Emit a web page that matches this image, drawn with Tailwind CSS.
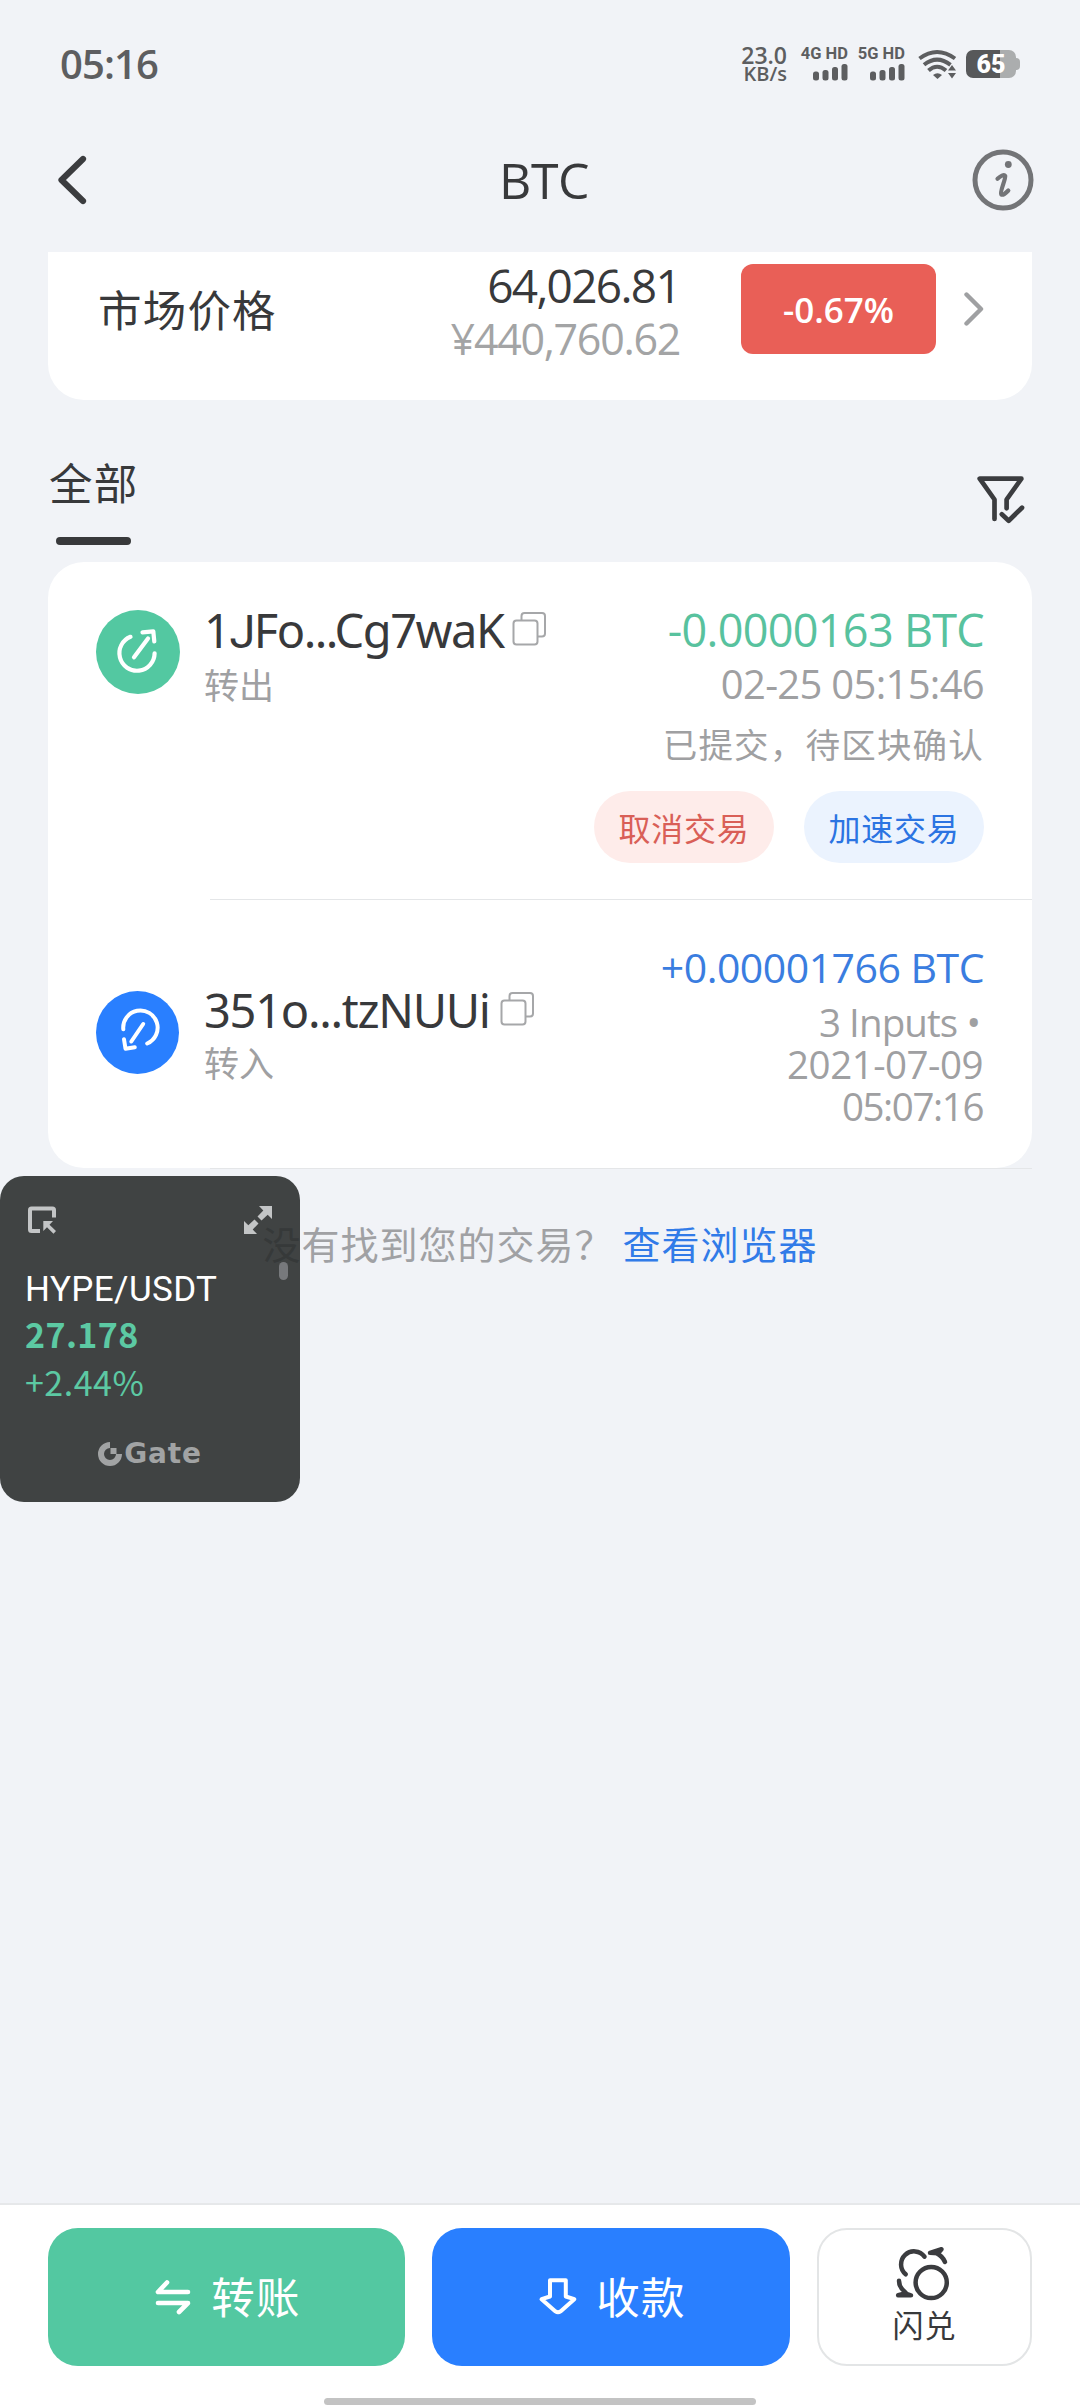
<!DOCTYPE html>
<html lang="zh-CN">
<head>
<meta charset="utf-8">
<title>BTC</title>
<script src="https://cdn.jsdelivr.net/npm/@tailwindcss/browser@4"></script>
</head>
<body class="bg-[#f1f3f7]">
<div class="relative flex h-[2408px] w-[1080px] flex-col overflow-hidden bg-[#f1f3f7] font-['Open_Sans','Noto_Sans_CJK_SC',sans-serif] text-[#38393b]">

  <!-- Status bar -->
  <header class="flex h-[128px] shrink-0 items-center justify-between pr-[60px] pl-[60px] text-[#5d5e60]">
    <div class="text-[40px] leading-none font-semibold tracking-[-0.9px]">05:16</div>
    <div class="flex items-center">
      <div class="mr-[13px] flex flex-col items-end">
        <div class="text-[23px] leading-[20px] font-semibold">23.0</div>
        <div class="text-[20px] leading-[18px] font-semibold">KB/s</div>
      </div>
      <div class="mr-[9px] flex h-[34px] w-[48px] flex-col items-end justify-between font-['Roboto',sans-serif]">
        <div class="text-[16.5px] leading-[14px] font-bold whitespace-nowrap">4G HD</div>
        <svg width="36" height="17" viewBox="0 0 36 17" fill="currentColor"><rect x="1" y="7.500" width="6" height="9" rx="2.500"/><rect x="10.500" y="6" width="6" height="10.500" rx="2.500"/><rect x="20" y="3" width="6" height="13.500" rx="2.500"/><rect x="29.500" y="0" width="6" height="16.500" rx="2.500"/></svg>
      </div>
      <div class="mr-[12px] flex h-[34px] w-[48px] flex-col items-end justify-between font-['Roboto',sans-serif]">
        <div class="text-[16.5px] leading-[14px] font-bold whitespace-nowrap">5G HD</div>
        <svg width="36" height="17" viewBox="0 0 36 17" fill="currentColor"><rect x="1" y="7.500" width="6" height="9" rx="2.500"/><rect x="10.500" y="6" width="6" height="10.500" rx="2.500"/><rect x="20" y="3" width="6" height="13.500" rx="2.500"/><rect x="29.500" y="0" width="6" height="16.500" rx="2.500"/></svg>
      </div>
      <svg class="mr-[9px]" width="40" height="32" viewBox="0 0 40 32" fill="none" stroke="currentColor" stroke-width="4">
        <path d="M2.500 10.500Q20 -2.500 38 10.500"/><path d="M7 16.800Q20 6.500 33.500 16.800"/><path d="M11.500 22.500Q20 15 29 22.500"/>
        <path d="M16 27Q20.500 23.500 25 27L20.500 31Z" fill="currentColor" stroke="none"/>
        <path d="M31 22.500L35 17L39 22.500ZM31 25L35 30.500L39 25Z" fill="currentColor" stroke="none"/>
      </svg>
      <div class="flex items-center">
        <div class="flex h-[28px] w-[50px] items-center justify-center rounded-[7px] bg-linear-to-r from-[#57585a] from-68% to-[#abadae] to-68% font-['Roboto',sans-serif] text-[25px] leading-none font-black text-white">65</div>
        <div class="h-[12px] w-[4px] rounded-r-[4px] bg-[#abadae]"></div>
      </div>
    </div>
  </header>

  <!-- Title bar -->
  <nav class="flex h-[104px] shrink-0 items-center justify-between pr-[46px] pl-[54px]">
    <svg width="62" height="52" viewBox="0 0 62 52" fill="none" stroke="#3b3c3f" stroke-width="6.200" stroke-linecap="round" stroke-linejoin="round"><path d="M29 5L7.500 26L29 47"/></svg>
    <h1 class="text-[50px] leading-[52px] font-medium tracking-[-0.5px]">BTC</h1>
    <svg width="62" height="62" viewBox="0 0 62 62" fill="none" stroke="#737477"><circle cx="31" cy="31" r="28" stroke-width="5"/><circle cx="36.300" cy="15.500" r="3.400" fill="#737477" stroke="none"/><path d="M25.500 29.800C28.500 27 32 25 33.200 26.800C34 29.500 27.500 43 29.200 45.400C30.500 46.500 33.500 44.500 36.300 41.500" stroke-width="4.200" stroke-linecap="round"/></svg>
  </nav>

  <!-- Market price -->
  <section class="mx-[48px] mt-[20px] h-[148px] shrink-0 rounded-b-[36px] bg-white">
    <div class="flex h-[114px] items-center pr-[48px] pl-[50px]">
      <div class="mt-[4px] text-[43.5px] leading-none tracking-[1.2px]">市场价格</div>
      <div class="mt-[6px] ml-auto flex flex-col items-end leading-[54px]">
        <div class="text-[46px] tracking-[-1.7px]">64,026.81</div>
        <div class="text-[43px] tracking-[-1.3px] text-[#a3a4a5]">¥440,760.62</div>
      </div>
      <div class="ml-[61px] flex h-[90px] w-[195px] items-center justify-center rounded-[12px] bg-[#e95f57] text-[35px] leading-none font-semibold text-white">-0.67%</div>
      <svg class="ml-[28px]" width="20" height="36" viewBox="0 0 20 36" fill="none" stroke="#9fa0a2" stroke-width="4.400" stroke-linecap="round" stroke-linejoin="round"><path d="M2.500 3.500L17 18L2.500 32.500"/></svg>
    </div>
  </section>

  <!-- Tabs and filter -->
  <div class="flex h-[162px] shrink-0 items-start justify-between pr-[53px] pl-[49px]">
    <div class="flex flex-col items-center pt-[60px]">
      <div class="text-[43.5px] leading-[48px] tracking-[1.2px]">全部</div>
      <div class="mt-[29px] h-[8px] w-[75px] rounded-full bg-[#38393b]"></div>
    </div>
    <svg class="mt-[74px]" width="52" height="52" viewBox="0 0 52 52" fill="none" stroke="#3b3c3f" stroke-width="4.700" stroke-linecap="round" stroke-linejoin="round"><path d="M19.500 45V25.500L4.700 4.700H46.400L31.600 25.500V34.300"/><path d="M26.800 40.300L33.700 46.700L47 33.700"/></svg>
  </div>

  <!-- Transactions -->
  <section class="mx-[48px] flex h-[606px] shrink-0 flex-col rounded-[36px] bg-white">
    <article class="flex h-[337px] items-start pr-[48px] pl-[48px]">
      <svg class="mt-[48px]" width="84" height="84" viewBox="0 0 84 84" fill="none" stroke="#fff" stroke-width="4.200" stroke-linecap="round" stroke-linejoin="round"><circle cx="42" cy="42" r="42" fill="#53c8a1" stroke="none"/><path d="M34.500 26.800A17.600 17.600 0 1 0 58.600 43.300"/><path d="M38 47.300L52 28.500M46.500 22.300L57.300 21.300L58.300 31.500"/></svg>
      <div class="mt-[44px] ml-[24px]">
        <div class="flex items-start">
          <div class="font-['Noto_Sans',sans-serif] text-[47px] leading-[48px] tracking-[-1.5px]">1<span class="font-['Roboto',sans-serif]">J</span>Fo...Cg7waK</div>
          <svg class="mt-[5px] ml-[8px]" width="35" height="35" viewBox="0 0 35 35" fill="none" stroke="#a6a7a9" stroke-width="2"><path d="M9.500 9V5Q9.500 2 12.500 2H30Q33 2 33 5V22.500Q33 25.500 30 25.500H26"/><rect x="1.500" y="9.500" width="24" height="24" rx="3"/></svg>
        </div>
        <div class="mt-[8px] text-[35px] leading-[44px] text-[#9fa0a2]">转出</div>
      </div>
      <div class="mt-[44px] ml-auto flex flex-col items-end text-[#9fa0a2]">
        <div class="text-[45px] leading-[48px] tracking-[-0.7px] text-[#58c29e]">-0.0000163 BTC</div>
        <div class="mt-[8px] text-[40px] leading-[44px] tracking-[-0.7px]">02-25 05:15:46</div>
        <div class="mt-[17px] text-[34.5px] leading-[44px] tracking-[1.2px]">已提交，待区块确认</div>
        <div class="mt-[24px] flex gap-[30px] text-[32px] leading-none tracking-[0.8px]">
          <div class="flex h-[72px] w-[180px] items-center justify-center rounded-full bg-[#feecea] pt-[3px] text-[#d95f57]">取消交易</div>
          <div class="flex h-[72px] w-[180px] items-center justify-center rounded-full bg-[#ebf3fe] pt-[3px] text-[#2b74e2]">加速交易</div>
        </div>
      </div>
    </article>
    <div class="ml-[162px] h-px bg-[#e4e6e8]"></div>
    <article class="flex h-[268px] items-start pr-[48px] pl-[48px]">
      <svg class="mt-[91px]" width="83" height="83" viewBox="0 0 83 83" fill="none" stroke="#fff" stroke-width="4" stroke-linecap="round" stroke-linejoin="round"><circle cx="41.500" cy="41.500" r="41.500" fill="#297fff" stroke="none"/><path d="M27.300 38.300A17.200 17.200 0 1 1 51.200 52.500"/><path d="M47.200 33L35.300 50.500M28 48.300L29.500 57.700L38.800 56.300"/></svg>
      <div class="mt-[86px] ml-[25px]">
        <div class="flex items-start">
          <div class="font-['Noto_Sans',sans-serif] text-[47px] leading-[48px] tracking-[-1.3px]">351o...tzNUUi</div>
          <svg class="mt-[5px] ml-[10px]" width="35" height="35" viewBox="0 0 35 35" fill="none" stroke="#a6a7a9" stroke-width="2"><path d="M9.500 9V5Q9.500 2 12.500 2H30Q33 2 33 5V22.500Q33 25.500 30 25.500H26"/><rect x="1.500" y="9.500" width="24" height="24" rx="3"/></svg>
        </div>
        <div class="mt-[8px] text-[35px] leading-[44px] text-[#9fa0a2]">转入</div>
      </div>
      <div class="mt-[43px] ml-auto flex flex-col items-end text-[#9fa0a2]">
        <div class="text-[41px] leading-[48px] tracking-[-0.5px] text-[#3a7de0]">+0.00001766 BTC</div>
        <div class="mt-[10px] flex flex-col items-end pr-px text-[38.5px] leading-[42px]">
          <div class="pr-[3px] tracking-[-0.9px]">3 Inputs •</div>
          <div class="tracking-[-0.5px]">2021-07-09</div>
          <div class="tracking-[-1.4px]">05:07:16</div>
        </div>
      </div>
    </article>
  </section>
  <div class="mr-[48px] ml-[210px] h-px shrink-0 bg-[#e4e6e8]"></div>

  <div class="mt-[51px] flex shrink-0 justify-center gap-[9px] text-[38px] leading-[48px] tracking-[1px]">
    <div class="text-[#a0a1a4]">没有找到您的交易？</div>
    <div class="text-[#317be8]">查看浏览器</div>
  </div>

  <!-- Bottom actions -->
  <footer class="mt-auto flex h-[205px] shrink-0 flex-col items-center border-t-2 border-[#e6e8ea] bg-white pt-[23px]">
    <div class="flex h-[138px] w-full gap-[27px] px-[48px]">
      <div class="flex w-[357px] items-center justify-center gap-[19px] rounded-[30px] bg-[#53c8a1] pl-[2px] text-[43.5px] leading-none tracking-[1.2px] text-white">
        <svg width="38" height="38" viewBox="0 0 38 38" fill="none" stroke="currentColor" stroke-width="4.600" stroke-linecap="round" stroke-linejoin="round"><path d="M13 4.500L4 14H34M4 25H34L25 34"/></svg>
        <div class="pt-[2px]">转账</div>
      </div>
      <div class="flex w-[358px] items-center justify-center gap-[18px] rounded-[30px] bg-[#297fff] pl-[2px] text-[43.5px] leading-none tracking-[1.2px] text-white">
        <svg width="40" height="40" viewBox="0 0 40 40" fill="none" stroke="currentColor" stroke-width="4" stroke-linejoin="round"><path d="M12 3.200H27.800V19.500L36.300 22.200L22.500 34.400Q20 36.200 17.500 34.400L3.600 22.200L12 19.500Z"/></svg>
        <div class="pt-[2px]">收款</div>
      </div>
      <div class="flex w-[215px] flex-col items-center rounded-[30px] border-[2.5px] border-[#e3e5e6] pt-[13px]">
        <svg width="60" height="60" viewBox="0 0 60 60" fill="none" stroke="#3b3c3f" stroke-width="4.500" stroke-linecap="round" stroke-linejoin="round"><circle cx="36.200" cy="39.500" r="15.600"/><path d="M10.700 31.300A13 13 0 1 1 29.500 13.600"/><path d="M35 9.800L46.500 6.200L43 10.200ZM41 10.200Q47 12.500 50 19"/><path d="M4 37.700Q4 44.500 10.500 49.500M3.200 52.300H16L10 50.500Z"/></svg>
        <div class="mt-[3px] text-[31px] leading-[38px] tracking-[0.9px]">闪兑</div>
      </div>
    </div>
    <div class="mt-[32px] h-[7px] w-[432px] rounded-full bg-[#c3c3c3]"></div>
  </footer>

  <!-- Floating ticker -->
  <aside class="absolute top-[1176px] left-0 flex h-[326px] w-[300px] flex-col rounded-[24px] bg-[#272a2a]/88 px-[25px] pt-[29px] text-[#5cc9a3]">
    <div class="flex justify-between pl-[2px] pr-[2px] text-[#c3c5c6]">
      <svg width="30" height="30" viewBox="0 0 30 30" fill="none" stroke="currentColor" stroke-width="4"><path d="M13 26H4.500Q3 26 3 24.500V5Q3 3.500 4.500 3.500H25.500Q27 3.500 27 5V12.500"/><path d="M16.300 16H26L22.500 19.800L29 26L26.500 28.800L20 22.300L16.300 26Z" fill="currentColor" stroke="none"/></svg>
      <svg width="30" height="30" viewBox="0 0 30 30" fill="currentColor"><path d="M16 1H29V14L24.700 9.700L18.500 15.500L14.500 11.500L20.300 5.500Z"/><path d="M14 29H1V16L5.300 20.300L11.500 14.500L15.500 18.500L9.700 24.500Z"/></svg>
    </div>
    <div class="mt-[35px] font-['Roboto',sans-serif] text-[35px] leading-[40px] tracking-[0.4px] text-white">HYPE/USDT</div>
    <div class="mt-[4px] font-['Noto_Sans_CJK_SC',sans-serif] text-[34px] leading-[40px] font-bold tracking-[0.4px]">27.178</div>
    <div class="mt-[8px] font-['Noto_Sans_CJK_SC',sans-serif] text-[34px] leading-[40px] tracking-[0.5px]">+2.44%</div>
    <div class="mt-[40px] flex items-center justify-center gap-[2px] text-[#a1a3a4]">
      <svg width="24" height="24" viewBox="0 0 24 24" fill="none" stroke="currentColor" stroke-width="6"><path d="M12 3A9 9 0 1 0 21 12"/><rect x="12.500" y="6" width="6" height="6" fill="currentColor" stroke="none"/></svg>
      <div class="font-['DejaVu_Sans',sans-serif] text-[28px] leading-[24px] font-bold tracking-[0.8px]">Gate</div>
    </div>
    <div class="absolute top-[86px] left-[279px] h-[18px] w-[9px] rounded-full bg-[#77797c]"></div>
  </aside>
</div>
</body>
</html>
